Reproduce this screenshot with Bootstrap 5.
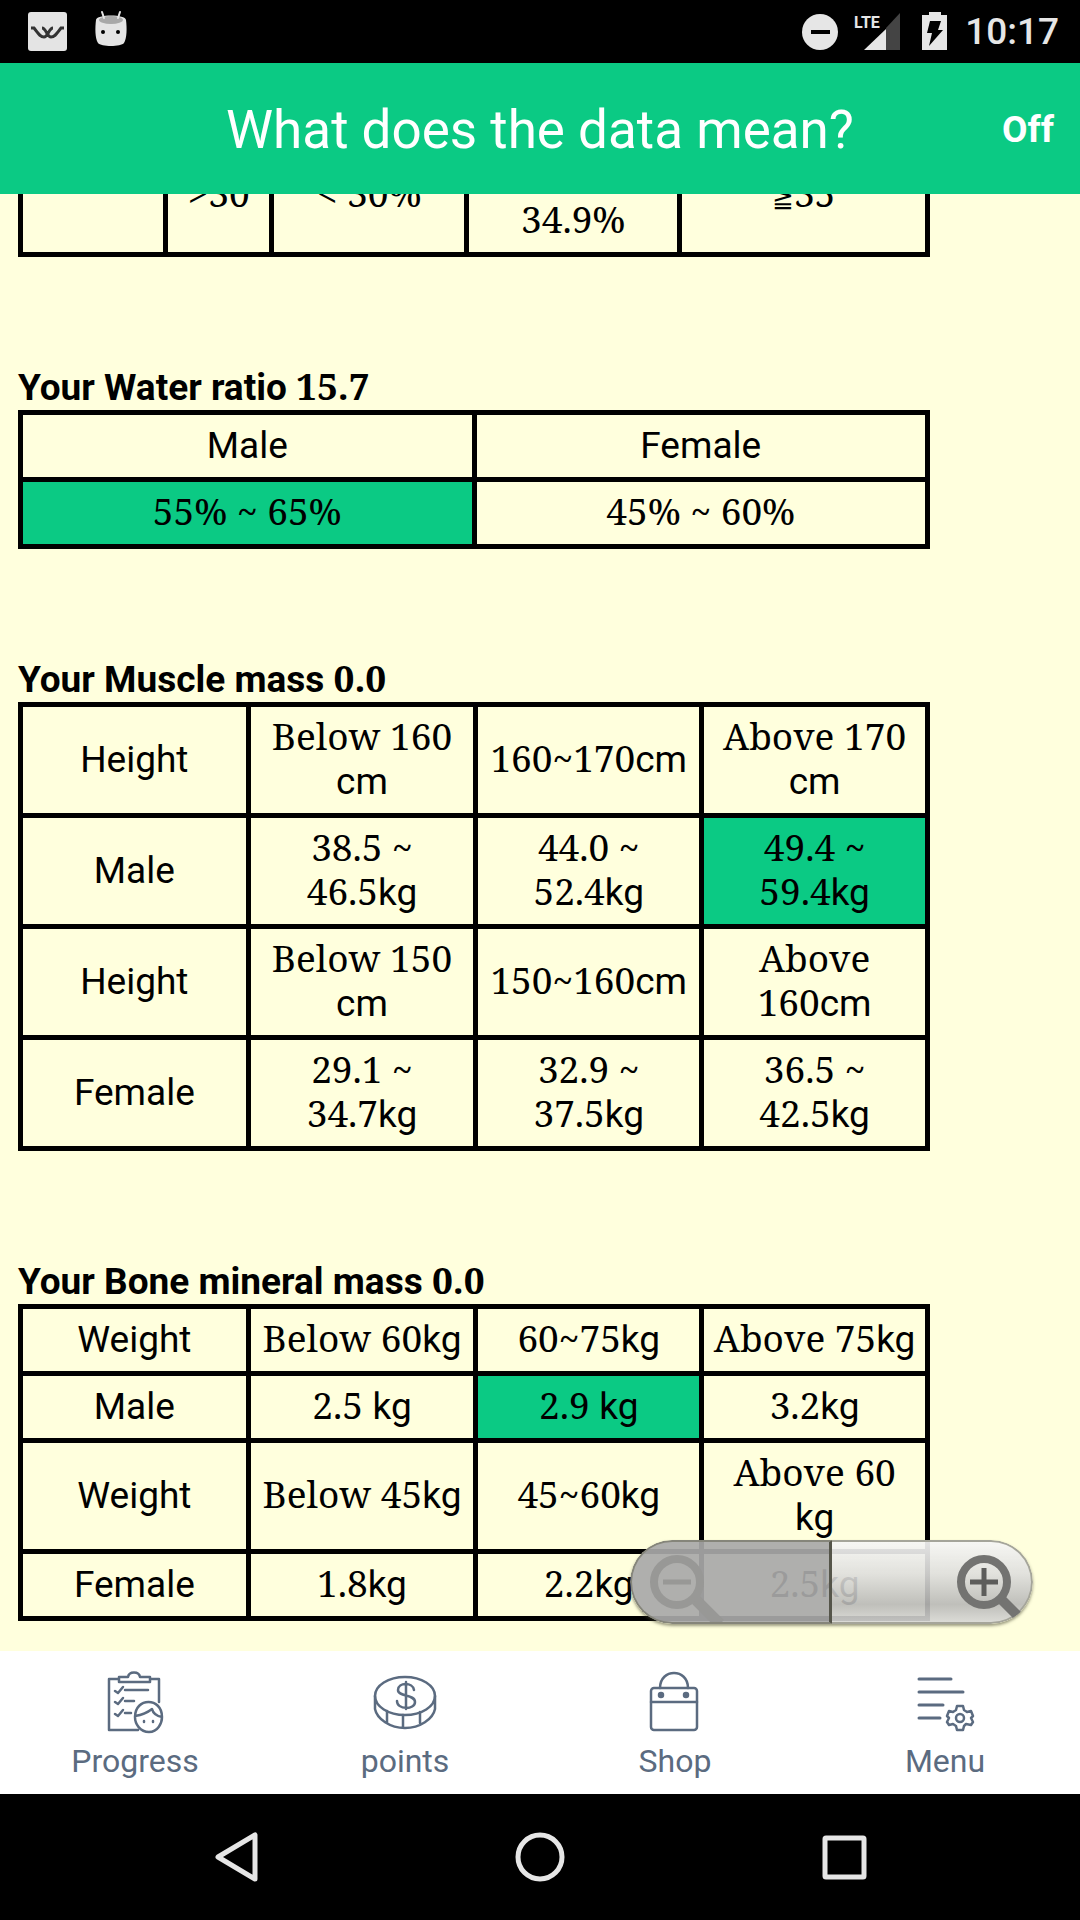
<!DOCTYPE html>
<html lang="en">
<head>
<meta charset="utf-8">
<meta name="viewport" content="width=device-width, initial-scale=1">
<title>What does the data mean?</title>
<link href="https://cdn.jsdelivr.net/npm/bootstrap@5.3.0/dist/css/bootstrap.min.css" rel="stylesheet">
<style>
  :root { --brand: #0bca84; --paper: #ffffdd; --ink: #5b6b80; --sys: #e6e6e6; }
  body { font-family: Roboto, "Liberation Sans", sans-serif; font-size: 37px; line-height: 44px; color: #000; background: var(--paper); }
  svg { display: block; flex: none; }

  .status-bar { height: 63px; padding: 0 21px 0 28px; color: var(--sys); background: #000; }
  .clock { font-size: 37px; font-weight: 500; }

  .title-bar { display: grid; grid-template-columns: 1fr auto 1fr; height: 131px; padding: 2px 26px 0; background: var(--brand); }
  .title-bar h1 { font-size: 53px; font-weight: 400; line-height: 60px; }
  .off-btn { font-size: 37px; font-weight: 700; line-height: 44px; }

  .sheet { min-height: 0; padding: 0 150px 30px 18px; }
  .sheet h2 { margin: 109px 0 0; font-size: 37px; font-weight: 700; line-height: 44px; }
  .num { font-family: "Noto Serif", "Liberation Serif", serif; line-height: 0; }
  .sign { font-family: "DejaVu Sans", sans-serif; font-size: 26px; }
  .ranges { width: 100%; table-layout: fixed; border-collapse: collapse; border: 5px solid #000; text-align: center; }
  .ranges th, .ranges td { padding: 9px 4px; border: 5px solid #000; font-weight: 400; vertical-align: middle; }
  .ranges .hit { background: var(--brand); background-clip: padding-box; }
  .ranges .tall > * { height: 119px; }
  .ranges .wide { width: 25.1%; }

  .zoom-pill { right: 47px; bottom: 27px; width: 403px; height: 84px; border-radius: 42px; overflow: hidden; box-shadow: 0 2px 3px rgba(60,60,40,.5); }
  .zoom-pill button { width: 50%; border: 2px solid #85857a; }
  .zoom-out { background: rgba(168,168,168,.92); border-right: 3px solid #55554a !important; border-radius: 42px 0 0 42px; }
  .zoom-in { border-left: 0 !important; border-color: #a5a59a !important; border-radius: 0 42px 42px 0; background: linear-gradient(rgba(246,246,246,.92), rgba(222,222,220,.9) 40%, rgba(184,184,182,.9) 78%, rgba(215,215,213,.9)); }

  .tab-bar { height: 143px; padding-top: 20px; background: #fff; }
  .tab-bar a { color: var(--ink); font-size: 32px; line-height: 44px; text-decoration: none; }
  .tab-bar svg { fill: none; stroke: currentColor; stroke-width: 2.5; stroke-linecap: round; stroke-linejoin: round; margin-bottom: 4px; }

  .system-nav { height: 126px; background: #000; color: var(--sys); }
  .system-nav button { width: 304px; }
  .system-nav svg { fill: none; stroke: currentColor; stroke-width: 5; stroke-linejoin: round; }
</style>
</head>
<body class="vh-100 d-flex flex-column overflow-hidden">

<div class="status-bar d-flex align-items-center flex-shrink-0">
  <svg width="100" height="44" viewBox="0 0 100 44" aria-hidden="true">
    <rect x="0" y="2" width="39" height="39" rx="3" fill="#e4e4e4"/>
    <path d="M3 18h3c4 5 6 9 10 9s5-9 9-9M14 18c4 0 5 9 9 9 4 0 6-4 10-9h3" fill="none" stroke="#333" stroke-width="3"/>
    <path d="M68 10c0-6 30-6 30 0 1 8 1 18-2 23-3 4-23 4-26 0-3-5-3-15-2-23z" fill="#e4e4e4"/>
    <ellipse cx="83" cy="10" rx="12" ry="4" fill="#a8a8a8"/>
    <path d="M74 2l2 6M92 2l-2 6" stroke="#e4e4e4" stroke-width="2" stroke-linecap="round"/>
    <circle cx="75" cy="22" r="2"/><circle cx="90" cy="22" r="2"/>
  </svg>
  <div class="d-flex align-items-center ms-auto">
    <svg width="164" height="44" viewBox="0 0 164 44" aria-label="Do not disturb, LTE, charging">
      <circle cx="19" cy="22" r="18" fill="#e6e6e6"/><rect x="10" y="20" width="19" height="4" fill="#000"/>
      <path d="M85 19v21H63z" fill="#e6e6e6"/><path d="M85 40V18L99 3v37z" fill="#444"/>
      <text x="53" y="18" font-size="16" font-weight="700" fill="#e6e6e6" font-family="Liberation Sans Narrow, Roboto, sans-serif">LTE</text>
      <path d="M121 5h7V2h12v3h6v35h-25z" fill="#e6e6e6"/><path d="M129 11h11l-3 9h5l-14 16 3-13h-5z" fill="#000"/>
    </svg>
    <span class="clock">10:17</span>
  </div>
</div>

<header class="title-bar align-items-center text-white flex-shrink-0">
  <span></span>
  <h1 class="m-0">What does the data mean?</h1>
  <button type="button" class="off-btn btn p-0 border-0 text-white ms-auto">Off</button>
</header>

<div class="flex-grow-1 d-flex flex-column position-relative overflow-hidden">
  <main class="sheet flex-grow-1 d-flex flex-column justify-content-end">
    <table class="ranges flex-shrink-0">
      <colgroup><col style="width:16%"><col style="width:11.7%"><col style="width:21.5%"><col style="width:23.5%"><col></colgroup>
      <tbody>
        <tr class="tall"><td></td><td><span class="num">&gt;30</span></td><td><span class="num">&lt; 30%</span></td><td class="align-bottom"><span class="num">34.9%</span></td><td><span class="num"><span class="sign">≧</span>35</span></td></tr>
      </tbody>
    </table>

    <h2>Your Water ratio <span class="num">15.7</span></h2>
    <table class="ranges flex-shrink-0">
      <thead><tr><th>Male</th><th>Female</th></tr></thead>
      <tbody><tr><td class="hit"><span class="num">55% ~ 65%</span></td><td><span class="num">45% ~ 60%</span></td></tr></tbody>
    </table>

    <h2>Your Muscle mass <span class="num">0.0</span></h2>
    <table class="ranges flex-shrink-0">
      <colgroup><col class="wide"><col class="wide"><col><col></colgroup>
      <tbody>
        <tr><th>Height</th><td><span class="num">Below 160</span><br>cm</td><td><span class="num">160~170</span>cm</td><td><span class="num">Above 170</span><br>cm</td></tr>
        <tr><th>Male</th><td><span class="num">38.5 ~<br>46.5</span>kg</td><td><span class="num">44.0 ~<br>52.4</span>kg</td><td class="hit"><span class="num">49.4 ~<br>59.4</span>kg</td></tr>
        <tr><th>Height</th><td><span class="num">Below 150</span><br>cm</td><td><span class="num">150~160</span>cm</td><td><span class="num">Above<br>160</span>cm</td></tr>
        <tr><th>Female</th><td><span class="num">29.1 ~<br>34.7</span>kg</td><td><span class="num">32.9 ~<br>37.5</span>kg</td><td><span class="num">36.5 ~<br>42.5</span>kg</td></tr>
      </tbody>
    </table>

    <h2>Your Bone mineral mass <span class="num">0.0</span></h2>
    <table class="ranges flex-shrink-0">
      <colgroup><col class="wide"><col class="wide"><col><col></colgroup>
      <tbody>
        <tr><th>Weight</th><td><span class="num">Below 60</span>kg</td><td><span class="num">60~75</span>kg</td><td><span class="num">Above 75</span>kg</td></tr>
        <tr><th>Male</th><td><span class="num">2.5 </span>kg</td><td class="hit"><span class="num">2.9 </span>kg</td><td><span class="num">3.2</span>kg</td></tr>
        <tr><th>Weight</th><td><span class="num">Below 45</span>kg</td><td><span class="num">45~60</span>kg</td><td><span class="num">Above 60</span><br>kg</td></tr>
        <tr><th>Female</th><td><span class="num">1.8</span>kg</td><td><span class="num">2.2</span>kg</td><td><span class="num">2.5</span>kg</td></tr>
      </tbody>
    </table>
  </main>

  <div class="zoom-pill position-absolute d-flex">
    <button type="button" class="zoom-out p-0" aria-label="Zoom out">
      <svg width="197" height="80" viewBox="2 2 197 80" fill="none" stroke="#989896">
        <circle cx="47" cy="42" r="23" stroke-width="8"/><path d="M33 42h28" stroke-width="5"/><path d="M66 60l24 24" stroke-width="11"/>
      </svg>
    </button>
    <button type="button" class="zoom-in p-0" aria-label="Zoom in">
      <svg width="199" height="80" viewBox="0 2 199 80" fill="none" stroke="#737371">
        <circle cx="152" cy="42" r="23" stroke-width="8"/><path d="M138 42h28M152 28v28" stroke-width="5" stroke="#5d5d5b"/><path d="M170 60l16 16" stroke-width="10"/>
      </svg>
    </button>
  </div>
</div>

<nav class="tab-bar d-flex flex-shrink-0">
  <a href="#progress" class="col-3 d-flex flex-column align-items-center">
    <svg width="64" height="64" viewBox="0 0 64 64">
      <path d="M15 8H6v51h29M47 8h9v23M16 6h9c1-6 11-6 12 0h10v5H16z"/>
      <path d="M12 20l3 2 5-6M22 19h23M12 31l3 2 5-6M22 30h9M12 43l3 2 5-6M22 42h6"/>
      <path d="M32 46c0-20 27-20 27 0 0 6-4 15-13 15s-14-8-14-15zM32 45c6-1 12-3 17-7 1 4 4 7 10 8"/>
      <path d="M41 50v1M50 50v1"/>
    </svg>
    Progress
  </a>
  <a href="#points" class="col-3 d-flex flex-column align-items-center">
    <svg width="64" height="64" viewBox="0 0 64 64">
      <ellipse cx="32" cy="25" rx="30" ry="19"/><path d="M2 25v13c2 10 15 19 30 19s28-9 30-19V25M14 40v12M30 44v12M47 41v11"/>
      <path d="M41 19c-1-8-16-8-16 0 0 7 17 4 17 12 0 8-18 8-18-1M33 11v27"/>
    </svg>
    points
  </a>
  <a href="#shop" class="col-3 d-flex flex-column align-items-center">
    <svg width="64" height="64" viewBox="0 0 64 64">
      <rect x="8" y="17" width="46" height="42" rx="3"/><path d="M8 31h46M17 17c0-20 28-20 28 0"/>
      <circle cx="18" cy="24" r="2" fill="currentColor"/><circle cx="43" cy="24" r="2" fill="currentColor"/>
    </svg>
    Shop
  </a>
  <a href="#menu" class="col-3 d-flex flex-column align-items-center">
    <svg width="64" height="64" viewBox="0 0 64 64">
      <path d="M6 8h32M6 21h44M6 34h24M6 47h21" stroke-width="3"/>
      <circle cx="47" cy="47" r="4"/>
      <path d="M44 35h6l1 4 3 2 4-1 2 5-2 2 2 4-2 3-5-1-2 2-1 4h-6l-1-4-3-2-4 1-2-3 2-4-2-2 2-5 4 1 3-2z"/>
    </svg>
    Menu
  </a>
</nav>

<div class="system-nav d-flex justify-content-center align-items-center flex-shrink-0">
  <button type="button" class="btn p-0 border-0 text-reset d-flex justify-content-center" aria-label="Back"><svg width="50" height="50" viewBox="0 0 50 50"><path d="M44 3v44L7 25z"/></svg></button>
  <button type="button" class="btn p-0 border-0 text-reset d-flex justify-content-center" aria-label="Home"><svg width="50" height="50" viewBox="0 0 50 50"><circle cx="25" cy="25" r="22"/></svg></button>
  <button type="button" class="btn p-0 border-0 text-reset d-flex justify-content-center" aria-label="Overview"><svg width="50" height="50" viewBox="0 0 50 50"><rect x="6" y="6" width="39" height="39" rx="1"/></svg></button>
</div>

<script src="https://cdn.jsdelivr.net/npm/bootstrap@5.3.0/dist/js/bootstrap.bundle.min.js"></script>
</body>
</html>
